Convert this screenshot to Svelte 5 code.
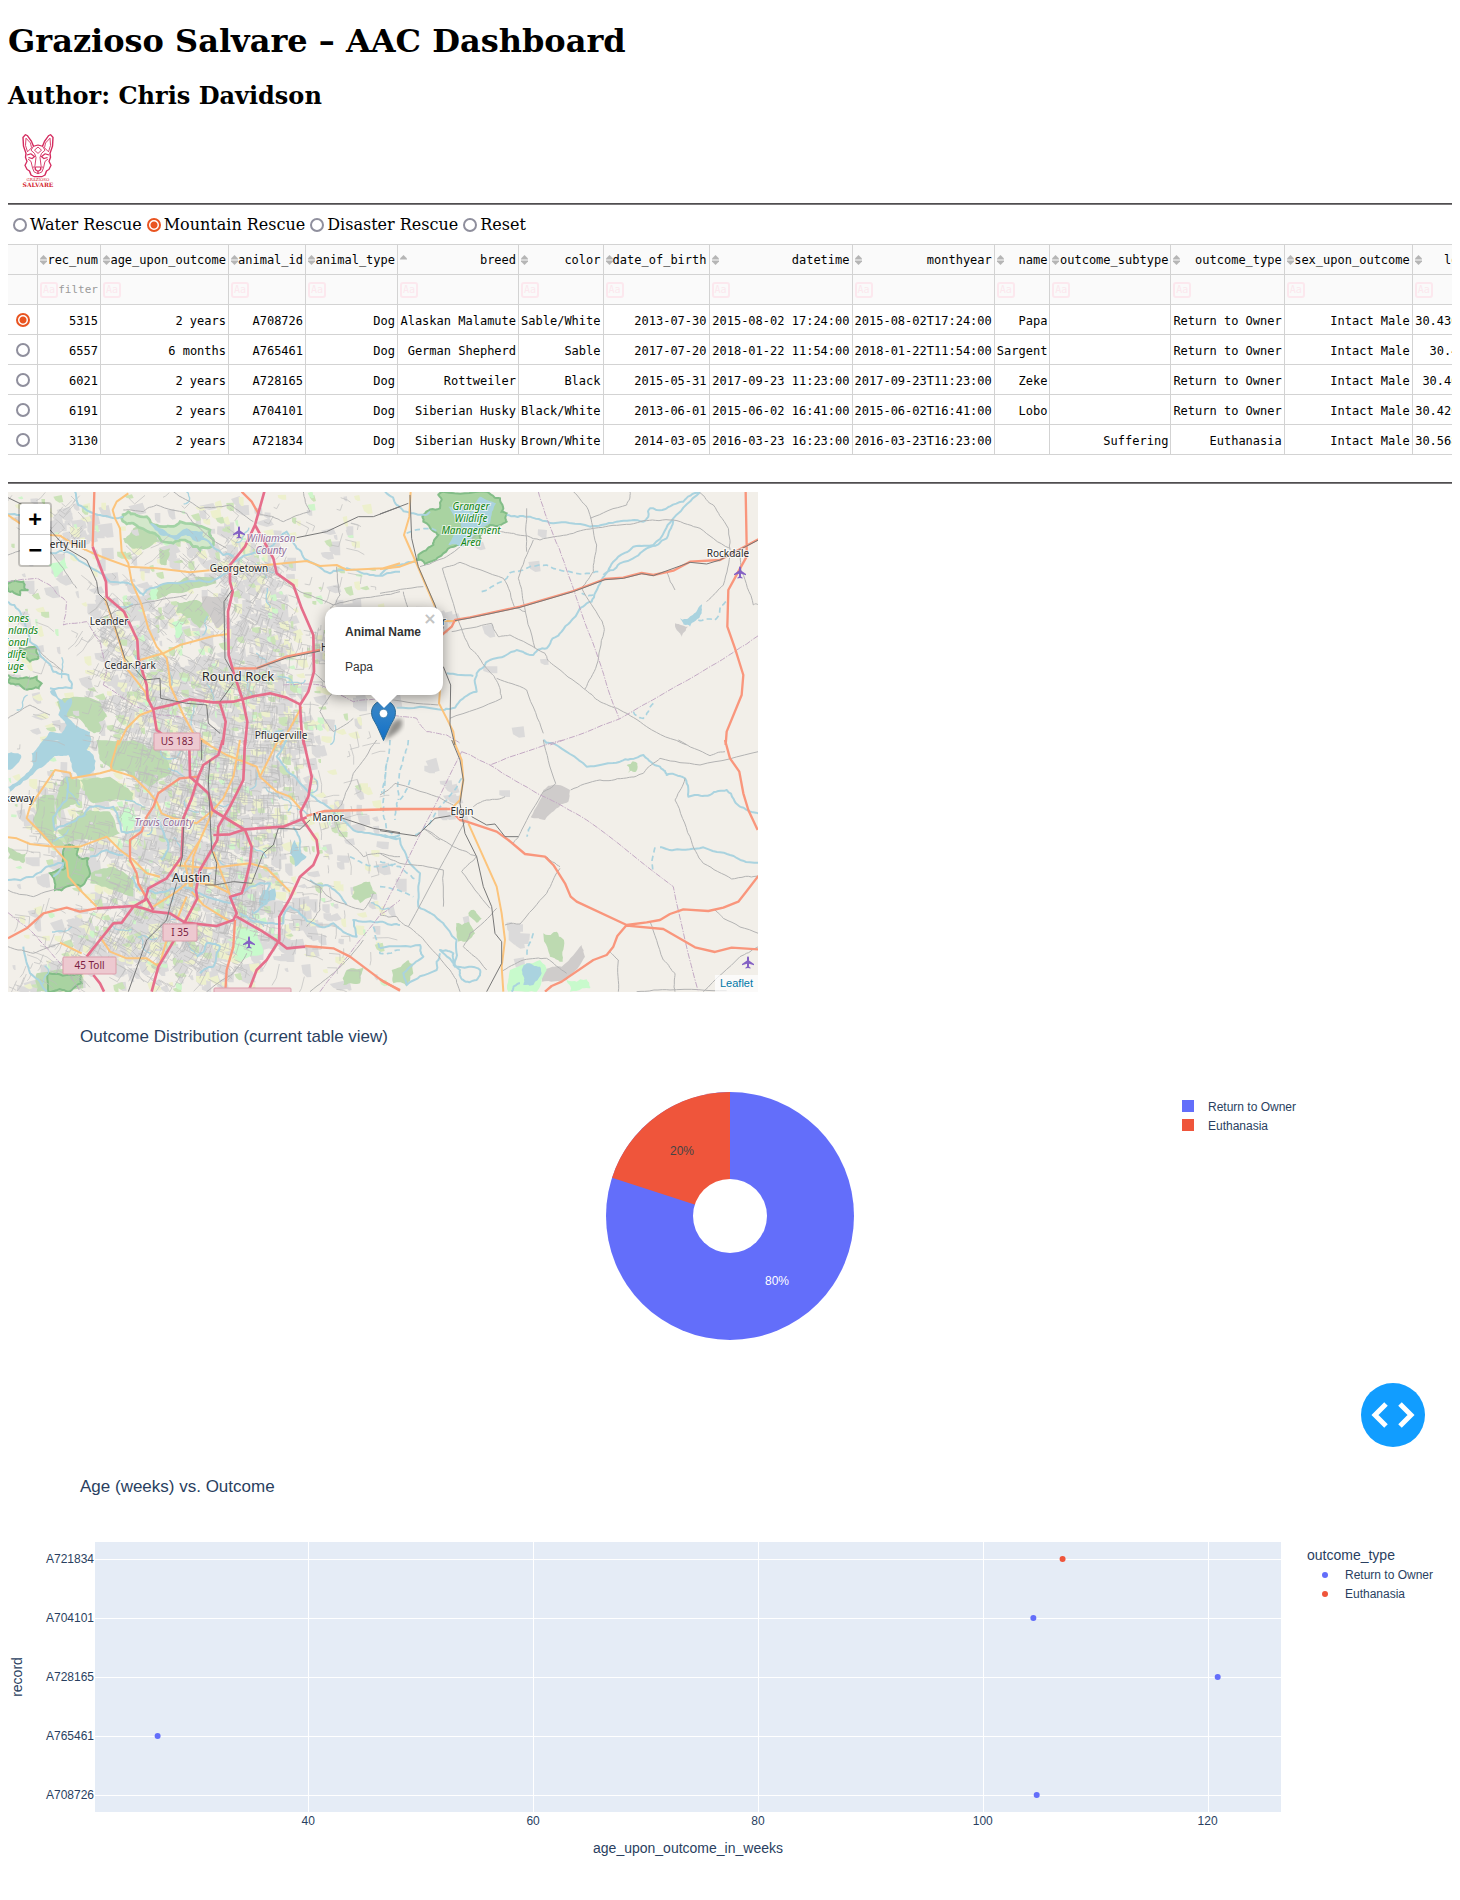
<script>
  let rescue = $state('Mountain Rescue');
  let selectedRow = $state(0);
  let sortColumn = $state('breed');
  let width = $state(1444);

  const rescues = ['Water Rescue', 'Mountain Rescue', 'Disaster Rescue', 'Reset'];
  const columns = [
    ['rec_num', 63], ['age_upon_outcome', 128], ['animal_id', 77], ['animal_type', 92], ['breed', 121], ['color', 84],
    ['date_of_birth', 106], ['datetime', 143], ['monthyear', 142], ['name', 55], ['outcome_subtype', 121],
    ['outcome_type', 113], ['sex_upon_outcome', 128], ['location_lat', 121]
  ].map(([name, w]) => ({ name, w }));
  const rows = [
    ['5315', '2 years', 'A708726', 'Dog', 'Alaskan Malamute', 'Sable/White', '2013-07-30', '2015-08-02 17:24:00', '2015-08-02T17:24:00', 'Papa', '', 'Return to Owner', 'Intact Male', '30.4301650478383'],
    ['6557', '6 months', 'A765461', 'Dog', 'German Shepherd', 'Sable', '2017-07-20', '2018-01-22 11:54:00', '2018-01-22T11:54:00', 'Sargent', '', 'Return to Owner', 'Intact Male', '30.45820413376'],
    ['6021', '2 years', 'A728165', 'Dog', 'Rottweiler', 'Black', '2015-05-31', '2017-09-23 11:23:00', '2017-09-23T11:23:00', 'Zeke', '', 'Return to Owner', 'Intact Male', '30.465103728164'],
    ['6191', '2 years', 'A704101', 'Dog', 'Siberian Husky', 'Black/White', '2013-06-01', '2015-06-02 16:41:00', '2015-06-02T16:41:00', 'Lobo', '', 'Return to Owner', 'Intact Male', '30.4264983127465'],
    ['3130', '2 years', 'A721834', 'Dog', 'Siberian Husky', 'Brown/White', '2014-03-05', '2016-03-23 16:23:00', '2016-03-23T16:23:00', '', 'Suffering', 'Euthanasia', 'Intact Male', '30.5683318126472']
  ];

  const blue = '#636efa';
  const red = '#ef553b';

  const plotLeft = 87;
  const plotWidth = $derived(width - 258);
  const xOf = (v) => plotLeft + ((v - 21.03) / 105.5) * plotWidth;
  const records = ['A721834', 'A704101', 'A728165', 'A765461', 'A708726'];
  const yOf = (i) => 117 + i * 59;
  const ticks = [40, 60, 80, 100, 120];
  const points = [
    { v: 107.1, i: 0, c: red },
    { v: 104.5, i: 1, c: blue },
    { v: 120.9, i: 2, c: blue },
    { v: 26.6, i: 3, c: blue },
    { v: 104.8, i: 4, c: blue }
  ];
  const cx = $derived(width / 2);

  // Terrain is kept in four tiles, at three units to the pixel.
  const tiles = [[0, 0], [1140, 0], [0, 765], [1140, 765]];

  let seed = 7;
  const rnd = () => {
    seed = (seed * 16807) % 2147483647;
    return seed / 2147483647;
  };

  function rough(d, amp, levels = 3) {
    return d
      .split('M')
      .filter(Boolean)
      .map((part) => {
        const closed = part.includes('Z');
        let pts = part.replace('Z', '').trim().split(/\s+/).map((p) => p.split(',').map(Number));
        if (closed) pts.push(pts[0]);
        for (let l = 0, a = amp; l < levels; l++, a /= 2) {
          const next = [];
          for (let k = 0; k < pts.length - 1; k++) {
            const [x1, y1] = pts[k];
            const [x2, y2] = pts[k + 1];
            const f = Math.min(1, Math.hypot(x2 - x1, y2 - y1) / 20);
            next.push(pts[k], [(x1 + x2) / 2 + (rnd() - 0.5) * a * 2 * f, (y1 + y2) / 2 + (rnd() - 0.5) * a * 2 * f]);
          }
          next.push(pts[pts.length - 1]);
          pts = next;
        }
        return 'M' + pts.map((p) => p[0].toFixed(0) + ',' + p[1].toFixed(0)).join(' ') + (closed ? 'Z' : '');
      })
      .join('');
  }

  // Town centres: x, y, radius across, radius down, weight
  const towns = [
    [580, 1160, 250, 300, 1], [640, 900, 230, 220, 1], [450, 660, 150, 170, 0.95], [700, 600, 180, 120, 0.95],
    [370, 440, 90, 130, 0.8], [740, 260, 120, 120, 0.65], [780, 420, 100, 140, 0.65], [830, 750, 110, 110, 0.7],
    [400, 1360, 220, 100, 0.85], [210, 110, 80, 70, 0.45], [600, 210, 160, 160, 0.25], [200, 1000, 160, 160, 0.3],
    [860, 1300, 120, 130, 0.35], [560, 400, 150, 90, 0.3], [1000, 980, 50, 50, 0.5], [180, 1440, 120, 70, 0.3],
    [1320, 960, 50, 50, 0.4], [1540, 1370, 30, 60, 0.8], [1280, 400, 60, 40, 0.6], [960, 480, 50, 60, 0.6]
  ];
  const density = (x, y, base = 0.01) => {
    let d = x < 1140 ? base * 4 : base;
    for (const [tx, ty, rx, ry, w] of towns) {
      d = Math.max(d, w * Math.exp(-Math.pow(((x - tx) / rx) ** 2 + ((y - ty) / ry) ** 2, 1.8)));
    }
    return d;
  };

  function patches(n, min, max, power, spanX) {
    let d = '';
    for (let k = 0; k < n; k++) {
      const x = 24 + rnd() * spanX;
      const y = 21 + rnd() * 1500;
      const w = min + rnd() * (max - min);
      const h = min + rnd() * (max - min);
      const s = w * (rnd() - 0.2) * 0.5;
      if (rnd() > Math.pow(density(x, y), power)) continue;
      d += `M${x | 0},${y | 0}l${w | 0},${(-s) | 0} ${(s) | 0},${h | 0} ${(-w / 2) | 0},${(s / 2) | 0} ${(-w / 2) | 0},${(-h / 3) | 0}Z`;
    }
    return d;
  }

  function streets(n) {
    let d = '';
    for (let k = 0; k < n; k++) {
      const x = 24 + rnd() * 1120;
      const y = 21 + rnd() * 1500;
      if (rnd() > density(x, y)) continue;
      const a = 0.3 * Math.sin(x / 260) + 0.3 * Math.cos(y / 300) + 0.25 + (rnd() < 0.5 ? Math.PI / 2 : 0) + (rnd() - 0.5) * 0.12;
      const l = 14 + rnd() * 34;
      const b = a + (rnd() < 0.5 ? 1.5 : 0.3);
      d += `M${x | 0},${y | 0}l${(Math.cos(a) * l) | 0},${(Math.sin(a) * l) | 0} ${(Math.cos(b) * l * 0.6) | 0},${(Math.sin(b) * l * 0.6) | 0}`;
    }
    return d;
  }

  function creeks(n) {
    let d = '';
    for (let k = 0; k < n; k++) {
      const x = 24 + rnd() * 1150;
      const y = 21 + rnd() * 1500;
      if (rnd() > density(x, y) + 0.05) continue;
      d += `M${x | 0},${y | 0}`;
      let a = rnd() * 1.6 - 0.3;
      for (let j = 0; j < 9; j++) {
        a += (rnd() - 0.5) * 1.3;
        d += `l${(Math.cos(a) * 8) | 0},${(Math.sin(a) * 8) | 0} `;
      }
    }
    return d;
  }

  const urban = patches(6500, 16, 44, 1, 1600);
  const farms = patches(900, 12, 32, 0.5, 1120);
  const woods = patches(800, 8, 28, 0.6, 1120);
  const parks = patches(520, 6, 22, 0.7, 1120);
  const suburbs = patches(700, 8, 24, 0.8, 1120);
  const blocks = streets(6000);
  const brooks = creeks(150);

  const layers = [
    ['forest', 8, [
      'M170,650 220,635 300,650 320,690 300,740 265,735 235,700 190,690ZM480,300 560,275 640,275 650,295 560,320 480,340 440,345 450,320ZM530,350 580,345 640,370 625,405 600,430 560,400 530,385ZM370,160 400,130 450,130 480,170 430,195 390,185ZM480,190 510,190 500,240 480,235Z',
      '',
      'M290,0 400,0 500,40 510,100 450,140 400,110 340,90 300,60ZM200,110 240,120 230,190 170,220 175,150ZM240,120 330,110 400,160 410,190 340,180 280,190 250,160ZM110,180 160,165 170,230 160,280 200,320 150,310 100,240ZM170,270 270,210 330,215 360,280 280,300 200,310ZM24,320 80,340 70,370 24,355ZM270,400 340,380 400,420 400,470 340,450 270,430ZM110,700 240,690 250,745 110,755ZM1060,440 1110,425 1130,460 1080,490 1055,470ZM1040,690 1090,680 1080,730 1030,735Z',
      'M490,580 530,575 552,600 548,665 510,650ZM228,550 265,545 285,580 250,605 230,590ZM265,520 285,512 305,535 290,548ZM740,75 765,65 768,95 745,98ZM35,690 85,660 100,700 80,740 40,730Z'
    ]],
    ['reserve', 8, [
      'M24,295 70,290 85,315 60,330 24,318ZM24,570 60,580 110,575 125,595 95,612 60,600 24,590ZM60,490 110,485 115,520 90,530Z',
      'M130,90 180,70 175,30 190,20 320,20 360,40 365,80 380,85 380,110 330,120 300,150 290,170 250,180 190,205 135,237 108,225 115,210 160,180 175,150 130,110Z',
      'M150,400 195,385 190,330 215,315 235,325 235,350 265,355 270,400 240,440 200,440 165,450ZM145,700 245,700 245,730 205,755 145,755Z',
      ''
    ]],
    ['preserve', 10, ['M365,100 385,80 440,95 490,125 540,110 630,135 640,180 600,195 555,165 520,175 470,150 400,115Z', '', '', '']],
    ['quarry', 5, ['M605,335 680,335 680,410 650,430 610,370Z', 'M885,415 925,425 905,455 890,435Z', '', 'M490,150 525,133 570,150 565,185 530,205 495,240 452,232ZM480,690 545,680 605,615 615,650 560,720 485,725Z']],
    ['mint', 8, ['M145,240 195,215 205,250 165,278ZM515,415 555,410 550,445 530,460ZM455,310 475,315 470,345 455,345Z', '', 'M350,230 385,200 410,230 400,260 370,280ZM710,560 770,570 790,640 730,660 705,640Z', 'M390,690 480,660 500,690 470,755 385,755ZM560,720 620,718 630,745 570,755Z']],
    ['lake', 6, [
      'M130,765 150,740 185,745 200,720 175,690 180,660 150,620 165,615 195,655 215,640 200,690 225,720 270,740 275,765ZM450,115 480,130 530,150 560,130 610,140 615,165 590,170 560,150 525,165 480,150Z',
      'M205,65 250,62 272,82 300,35 348,55 330,115 290,140 245,185 205,180 245,130 228,105ZM900,400 925,400 965,358 965,385 930,425 910,418Z',
      'M24,160 24,140 60,118 100,72 95,40 130,0 200,0 275,0 260,30 282,50 285,88 265,105 232,108 215,70 205,45 165,48 140,70 110,90 60,135ZM24,40 55,40 60,60 30,90 24,90ZM870,340 885,300 905,340 920,350 885,380ZM790,450 825,445 825,480 780,500Z',
      'M425,690 440,670 480,680 485,700 460,735 430,735Z'
    ]],
    ['river', 7, [
      'M225,20 235,60 300,90 370,95M24,88 90,105M150,205 200,200 260,240 330,290 400,300 430,330 450,310 540,295 620,290 690,260M690,240 740,210 820,180 860,140 890,190 920,225 990,265 1040,250 1110,270 1200,260M560,150 620,165 670,210 700,215M24,350 60,380 90,470 130,520 160,560 205,570 215,610 150,610',
      'M0,270 60,240 110,230M15,20 50,60 100,85 150,80M380,90 440,95 520,115 630,125 710,110 790,110 810,70 860,70 910,50 960,22M960,22 880,100 820,180 760,185 700,230 665,285 635,350 600,370 545,440 500,490 460,510 410,495 330,525 290,565 290,620 230,660 190,675 50,668M880,105 860,160 800,190 720,235 670,270M200,565 280,573',
      'M24,420 100,410 140,380 190,370 160,410M200,110 200,180 160,230 165,270 230,240 270,200 340,200 365,275 420,270 480,240 505,310 485,360M270,350 320,330 370,345M860,0 830,50 900,130 970,190 1060,270 1140,285 1200,285M930,420 990,440 1040,495M690,490 750,440 810,430 800,490 760,520M720,520 800,550 850,550 870,500 910,530 960,560 1000,550 1070,590 1060,540 1140,545 1200,555M590,650 620,610 660,620 640,680 600,700M880,260 900,310 890,350M70,620 90,700 140,755M395,410 420,450 470,460 540,440 600,460 690,490',
      'M490,0 520,10 620,80 720,65 790,45 840,80 860,105 915,115 925,170 990,165 1040,150 1080,200 1135,220M840,322 880,330 970,322 1050,345 1135,368M0,285 60,295 80,350 120,400 115,500 190,550 230,600 225,680 300,690 290,720 250,720 240,690 180,630 220,640 225,680M0,625 120,615 130,650 70,700 80,735 170,690 180,640M395,755 420,730'
    ]],
    ['stream', 6, [
      '', 'M80,145 155,130 175,140M305,320 380,280 400,260 500,240 590,265 660,260M955,405 1005,405 1025,360 1040,350M640,330 605,325M820,655 790,700 760,680',
      'M1160,70 1150,180 1160,270 1190,300M1050,350 1120,380 1190,370M1120,560 1140,640 1200,630',
      'M30,0 5,160M85,0 60,90 55,180M245,115 200,180 150,250 100,290M90,120 50,190 45,240M825,322 818,395M450,260 440,290M460,580 440,650M0,365 60,380 110,420M0,440 100,470'
    ]],
    ['minor', 4, [
      'M370,75 430,80 470,60 560,85 600,130 680,190M520,20 600,70 690,60 760,110M24,210 90,180 150,200 190,250 230,310M24,500 110,490 190,560M775,85 850,110 930,80 910,20M830,265 900,320 1000,360 1080,340 1200,320M1010,245 1020,330 990,370M300,400 400,360 560,330M940,560 1000,620 960,680M960,680 1000,740 1060,700M24,700 90,660 150,690',
      'M350,140 400,145 480,165 560,150 640,130 720,120 800,107 880,105 960,130 1050,190M580,20 625,75 650,180 640,260 605,310 660,400 672,440 650,540 615,612M630,100 740,60 750,20M960,22 1000,60 1045,130 1050,200 1030,300 980,350M1080,210 1085,260 1120,360 1135,358M187,250 240,232 370,280 405,370 435,380M187,250 240,420 270,490 320,550 345,580 365,640 210,700M460,165 415,280 430,350 465,490M215,440 335,415 355,455 390,450 495,505 520,540 610,610 660,650 720,675 800,725 920,780M120,245 200,215 290,150M350,580 440,615 490,745M0,325 130,305M70,320 95,400M440,70 440,200M860,260 885,315M0,640 175,660',
      'M1000,230 1040,300 1090,350 1140,340 1200,350M960,440 1000,480 1090,510 1120,460M1060,100 1030,180 1000,225M1130,0 1060,100M620,755 700,700 740,640M24,620 100,640 180,610M930,755 1000,700 1090,600M900,410 960,440 960,510 920,560M24,450 100,470 190,440',
      'M490,0 527,130M572,150 660,120 730,115 790,100 840,55 960,75 1135,35M895,0 990,47 1035,35M527,130 490,155 425,270 400,310M915,115 885,180 930,290 970,370 1055,417 1135,408M540,385 500,460 420,552 375,555M1005,510 1030,535 1135,580M810,545 850,660 885,700 885,755M690,635 715,660 715,755M1135,620 1080,650 970,755M365,695 430,660 500,655 560,700M0,165 45,130 170,170 220,195M280,200 320,180 375,170M0,340 60,370 190,390 190,500M130,265 220,320 290,350 245,395 330,505M130,265 180,300M85,560 255,245M0,525 50,530 85,560 140,610 210,690 240,755M350,505 270,580 250,620 320,690M500,350 540,380M770,755 870,750 1040,752'
    ]],
    ['border', 3, [
      'M24,290 110,280 160,310 200,350 190,420 260,410 300,470 320,560 310,600M310,600 400,660 480,690 560,700M850,600 960,600 1060,650 1140,640',
      'M475,20 520,150 580,310 655,520 718,702M1135,452 990,545 718,702 510,780M40,690 110,700 140,740 200,750 240,775',
      'M24,518 100,580 190,680 240,755M960,755 1140,525 1200,480',
      'M550,0 330,75M245,35 330,75 480,165 620,240 880,440 955,755M245,35 0,525'
    ]],
    ['primary', 1, [
      'M24,90 60,115 150,150 180,152 215,175 280,205 330,225 385,245 470,250 570,262 690,250 800,240 920,228 960,243 1010,240 1040,255 1150,250 1200,235M385,25 350,50 338,75 345,100 360,130 365,200 385,235 395,290 425,360 445,430 470,485 500,520 508,570 510,600 550,690 580,745 630,780M420,525 490,505 540,480 640,453 685,447M315,340 360,475 380,550 435,620 445,650M460,675 420,690 380,730 355,780M905,665 870,730 840,780',
      'M0,252 60,245 105,228M92,20 88,95 72,150 105,225 165,365M185,550 177,655 200,700 220,740 225,780M180,408 230,408',
      'M355,0 333,75 335,90 300,100 215,115 210,98 165,90 90,200 80,235 130,285 160,320 200,365 205,410 240,450 290,500M335,90 400,110 450,160 470,185 485,220 520,235 590,250 640,210 670,175 700,110 720,0M24,292 50,295 90,312 160,320 240,320 320,290 360,330 400,360 440,400 480,410M600,0 680,45 770,80 780,110 830,155 870,170 905,210M835,0 780,110M520,375 630,385 750,370 800,385 830,415 870,455M570,440 555,370 600,300 640,210M600,430 640,435 690,460M575,455 610,495 690,545M560,470 530,540M460,500 530,455 560,430M575,440 580,350 600,300M300,590 330,635 380,655 440,655 470,675 480,670 500,600M180,608 245,640M640,335 655,375 680,440 690,465',
      'M220,0 245,60 250,120 240,180 220,200M265,250 350,440 365,520 375,600 365,680 370,755'
    ]],
    ['trunk', 1, [
      'M283,20 278,185M700,550 770,550 860,515 960,495M725,20 755,50 775,85',
      'M180,455 215,425 225,405 270,397 420,365 580,318 675,282 730,278 785,264 820,270 880,257 930,230 1020,225 1135,163M1097,20 1100,180 1100,215 1075,260 1045,315 1042,425 1065,490 1090,570 1085,630 1040,740 1037,780',
      'M595,110 540,115 475,160 460,200 440,230 425,275 390,300 390,360 410,400 415,430 440,475M24,595 80,565 130,520 200,503 240,515 290,505M705,540 700,620 680,690 676,755M915,618 1000,625 1050,650 1150,725 1200,750M920,228 975,213 1200,207',
      'M0,207 220,207M225,225 240,240 260,245 350,275 385,300 435,342 495,350 520,375 555,430 572,470 590,485 740,555 800,547 840,540 870,522 910,508 985,513 1030,503 1075,485 1095,460 1135,408M740,557 850,567 945,622 1005,636 1055,623 1135,628M740,555 712,588 700,620 680,645 640,660 545,725 515,738 495,755M0,718 60,752M1035,0 1050,55 1078,95 1090,160 1105,210 1133,270'
    ]],
    ['motorway', 1, [
      'M278,185 318,290 320,335 372,380 412,465 415,520 440,600 443,640 460,675 470,735 490,750M793,20 765,120 735,185 690,240 690,290 698,320 684,380 686,510 700,560 728,645 742,710 735,780M765,120 820,220 830,265 880,300 905,370 940,450 942,560 925,620 900,660 905,740 912,780M460,672 520,658 570,643 640,652 700,650 755,635 810,625 860,638 900,658M660,655 677,710 668,780',
      '',
      'M735,0 730,120 690,200 655,260 652,300 600,390 588,450 592,475 555,545 520,605 475,680 455,755M910,0 935,110 925,170 902,215 905,235 950,300 955,340 940,375 900,410 870,475 838,530 838,600 800,660 770,690 745,755M668,0 655,45 610,75 595,110 575,175 550,235 545,350 500,415 445,445 435,480 400,500 365,548 340,550 300,600 260,650M280,705 300,730 312,755M568,20 570,110 625,160 638,210 735,270 755,320 750,370 735,430 725,460 690,470 710,520 700,540 650,558 555,548 510,520 460,515 430,505 400,498 290,505M440,475 460,510M640,285 690,283 735,268 850,260 920,232M710,530 780,570 835,605 860,625 915,620',
      ''
    ]],
    ['rail', 1, [
      'M24,38 90,70 150,135 200,190 260,225 290,290 295,325 320,350 350,440 375,520 435,585 480,580 482,640 560,655 620,660 625,715 660,745M696,315 672,350 675,520 697,560M700,595 660,650M890,158 980,140 1075,95 1120,95 1200,65M770,550 860,519 960,498',
      'M0,87 85,55M90,30 95,160 115,245 165,360 190,430M190,545 212,600 210,720 225,780M225,407 270,399 420,367 580,320 675,284 730,280 785,266 820,272 930,232 980,237 1020,225 1135,165',
      'M605,0 605,60M630,60 625,120 635,330 650,370 645,435 615,435M552,235 547,350 540,380M645,435 700,425 755,430 790,340 820,315 835,265 900,268 930,240M1020,232 1120,265 1200,278M530,430 510,500 500,540 440,600 385,755',
      'M215,0 240,60 250,120 240,190 255,280 290,350 310,440 335,500 345,580 365,605 365,670 320,755M0,272 110,288 165,235 225,225M275,230 320,255 345,252 375,290 415,290'
    ]]
  ].map(([kind, amp, parts]) => ({ kind, parts: parts.map((p) => (amp > 1 ? rough(p, amp) : p)) }));

  const places = [
    ['end', 78, 56, 'Liberty Hill'], ['middle', 231, 80, 'Georgetown'], ['middle', 101, 133, 'Leander'],
    ['middle', 122, 177, 'Cedar Park'], ['middle', 273, 247, 'Pflugerville'], ['start', 313, 159, 'Hutto'],
    ['end', 438, 133, 'Taylor'], ['middle', 720, 65, 'Rockdale'], ['end', 26, 310, 'Lakeway'],
    ['middle', 320, 329, 'Manor'], ['middle', 454, 323, 'Elgin']
  ];
  const reserves = [
    ['middle', 463, 18, 'Granger'], ['middle', 463, 30, 'Wildlife'], ['middle', 463, 42, 'Management'], ['middle', 463, 54, 'Area'],
    ['end', 21, 130, 'Balcones'], ['end', 30, 142, 'Canyonlands'], ['end', 20, 154, 'National'], ['end', 18, 166, 'Wildlife'], ['end', 16, 178, 'Refuge']
  ];
  const counties = [[263, 50, 'Williamson'], [263, 62, 'County'], [156, 334, 'Travis County']];
  const shields = [[146, 241, 46, 'US 183'], [155, 432, 34, 'I 35'], [55, 465, 53, '45 Toll'], [206, 496, 77, '']];
  const airports = [[231, 40], [732, 80], [241, 450], [740, 470]];
</script>

<main>
  <h1>Grazioso Salvare – AAC Dashboard</h1>
  <h2>Author: Chris Davidson</h2>

  <svg class="logo" viewBox="0 0 60 68" role="img" aria-label="Grazioso Salvare logo">
    <g fill="none" stroke="#d42a5e" stroke-width="1" stroke-linejoin="round" transform="translate(0 1.600) scale(1 0.800)">
      <path stroke-width="1.400" d="M18 31 L15.500 22 L15 11 L17.500 7.500 L19.500 9 L23.500 16 L25.500 22 L30 20.500 L34.500 22 L36.500 16 L40.500 9 L42.500 7.500 L45 11 L44.500 22 L42 31 L42.500 36 L41 41 L43 46 L41 51 L38.500 53 L37 58 L34 60 H26 L23 58 L21.500 53 L19 51 L17 46 L19 41 L17.500 36 Z" />
      <path d="M18 12 L17.500 21 L19.500 29 L23.500 24 L22.500 18 Z M42 12 L42.500 21 L40.500 29 L36.500 24 L37.500 18 Z" />
      <path d="M30 23 L33.500 27 L30 31 L26.500 27 Z M25.500 22 L23 27 L26.500 31 L28 36 L27 46 L25 49 M34.500 22 L37 27 L33.500 31 L32 36 L33 46 L35 49" />
      <path stroke-width="1.400" d="M19 33 L23 31.500 L26.500 35 L24 37.500 L20.500 36 M41 33 L37 31.500 L33.500 35 L36 37.500 L39.500 36" />
      <path d="M20 38 L23 41 L24.500 49 L26 54 L30 56.500 L34 54 L35.500 49 L37 41 L40 38" />
      <path stroke-width="1.400" d="M27 48 H33 L32.500 51.500 L30 53.500 L27.500 51.500 Z M30 53.500 V56" />
    </g>
    <text class="logo-small" x="30" y="54">GRAZIOSO</text>
    <text class="logo-name" x="30" y="60">SALVARE</text>
  </svg>

  <hr />

  <div class="rescues" role="radiogroup" aria-label="Rescue type">
    {#each rescues as r}
      <label><input type="radio" name="rescue" value={r} bind:group={rescue} />{r}</label>
    {/each}
  </div>

  <div class="table-wrap">
    <table>
      <colgroup>
        <col class="pick-col" />
        {#each columns as c}<col style="width: {c.w}px" />{/each}
      </colgroup>
      <thead>
        <tr>
          <th class="pick"></th>
          {#each columns as c}
            <th>
              <button class="sort" onclick={() => (sortColumn = c.name)}>
                <svg viewBox="0 0 7 10" aria-hidden="true">
                  <path d="M3.500 0 L7 3.500 V4.500 H0 V3.500 Z" />
                  {#if sortColumn !== c.name}<path d="M3.500 10 L7 6.500 V5.500 H0 V6.500 Z" />{/if}
                </svg>
                <span>{c.name}</span>
              </button>
            </th>
          {/each}
        </tr>
        <tr>
          <th class="pick"></th>
          {#each columns as c, i}
            <th>
              <div class="filter">
                <button class="case" aria-label="Toggle case for {c.name}">Aa</button>
                <input type="text" aria-label="Filter {c.name}" placeholder={i === 0 ? 'filter' : ''} />
              </div>
            </th>
          {/each}
        </tr>
      </thead>
      <tbody>
        {#each rows as row, i}
          <tr>
            <td class="pick"><input type="radio" name="row" aria-label="Select {row[0]}" value={i} bind:group={selectedRow} /></td>
            {#each row as cell}<td>{cell}</td>{/each}
          </tr>
        {/each}
      </tbody>
    </table>
  </div>

  <hr />

  <section class="map" aria-label="Map">
    <svg class="terrain" viewBox="0 0 750 500" role="img" aria-label="Street map of Austin, Texas">
      <rect width="750" height="500" fill="#f2efe9" />
      <g transform="translate(-8 -7) scale(0.33333)">
        <path class="urban" d={urban} />
        <path class="farm" d={farms} />
        <path class="wood" d={woods} />
        <path class="park" d={parks} />
        {#each layers.slice(0, 1) as layer}
          {#each layer.parts as d, k}
            <path class={layer.kind} {d} transform="translate({tiles[k][0]} {tiles[k][1]})" />
          {/each}
        {/each}
        <path class="urban" d={suburbs} />
        {#each layers.slice(1, 6) as layer}
          {#each layer.parts as d, k}
            <path class={layer.kind} {d} transform="translate({tiles[k][0]} {tiles[k][1]})" />
          {/each}
        {/each}
        <path class="brook" d={brooks} />
        <path class="block" d={blocks} />
        {#each layers.slice(6) as layer}
          {#each layer.parts as d, k}
            <path class={layer.kind} {d} transform="translate({tiles[k][0]} {tiles[k][1]})" />
          {/each}
        {/each}
      </g>
      {#each airports as [x, y]}
        <path class="plane" d="M0 -6 L1 -4.500 V-1.500 L6 2 V3.200 L1 1.800 V4.500 L2.600 5.700 V6.500 L0 6 L-2.600 6.500 V5.700 L-1 4.500 V1.800 L-6 3.200 V2 L-1 -1.500 V-4.500 Z" transform="translate({x} {y})" />
      {/each}
      {#each shields as [x, y, w, t]}
        <rect class="shield" {x} {y} width={w} height="17" rx="1" />
        {#if t}<text class="shield-text" x={x + w / 2} y={y + 12}>{t}</text>{/if}
      {/each}
      {#each counties as [x, y, t]}<text class="county" {x} {y}>{t}</text>{/each}
      {#each reserves as [a, x, y, t]}<text class="reserve-name" text-anchor={a} {x} {y}>{t}</text>{/each}
      {#each places as [a, x, y, t]}<text class="place" text-anchor={a} {x} {y}>{t}</text>{/each}
      <text class="city" x="230" y="189">Round Rock</text>
      <text class="city" x="183" y="390">Austin</text>
    </svg>

    <div class="zoom">
      <button aria-label="Zoom in">+</button>
      <button aria-label="Zoom out">−</button>
    </div>

    <svg class="marker" viewBox="0 0 50 44" role="img" aria-label="Animal location">
      <defs>
        <linearGradient id="pin" x1="0" y1="0" x2="0" y2="1">
          <stop offset="0" stop-color="#3e8bc9" />
          <stop offset="1" stop-color="#126fc6" />
        </linearGradient>
        <filter id="soft"><feGaussianBlur stdDeviation="2" /></filter>
      </defs>
      <path d="M13 41 L20 24 Q28 16 31 20 Q33 27 25 33 Z" fill="#000" opacity="0.4" filter="url(#soft)" />
      <path d="M12.500 0.500 C5.800 0.500 0.500 5.900 0.500 12.500 C0.500 18 3.500 21 6 26 L12.500 40.500 L19 26 C21.500 21 24.500 18 24.500 12.500 C24.500 5.900 19.200 0.500 12.500 0.500 Z" fill="url(#pin)" stroke="#2e6c97" stroke-width="1" />
      <circle cx="12.500" cy="13.500" r="4.200" fill="#fff" stroke="#2e6c97" stroke-width="0.600" />
    </svg>

    <div class="popup">
      <strong>Animal Name</strong>
      <p>Papa</p>
      <button class="close" aria-label="Close popup">×</button>
      <svg class="tip" viewBox="0 0 40 20" aria-hidden="true"><path d="M6 0 L20 14 L34 0 Z" /></svg>
    </div>

    <a class="credit" href="https://leafletjs.com">Leaflet</a>
  </section>

  <section class="chart" bind:clientWidth={width}>
    <svg {width} height="450" role="img" aria-label="Outcome distribution">
      <text class="title" x="72" y="50">Outcome Distribution (current table view)</text>
      <g transform="translate({cx} 224)">
        <circle r="124" fill={blue} />
        <path d="M0 0 V-124 A124 124 0 0 0 -117.930 -38.320 Z" fill={red} />
        <circle r="37" fill="#fff" />
        <text class="slice dark" x="-48" y="-61">20%</text>
        <text class="slice" x="47" y="69">80%</text>
      </g>
      <rect x={width - 270} y="108" width="12" height="12" fill={blue} />
      <rect x={width - 270} y="127" width="12" height="12" fill={red} />
      <text class="label" x={width - 244} y="119">Return to Owner</text>
      <text class="label" x={width - 244} y="138">Euthanasia</text>
    </svg>
    <button class="debug" aria-label="Developer tools">
      <svg viewBox="0 0 64 64" aria-hidden="true"><path d="M25 21 L14 32 L25 43 M39 21 L50 32 L39 43" /></svg>
    </button>
  </section>

  <section class="chart">
    <svg {width} height="450" role="img" aria-label="Age in weeks against outcome">
      <text class="title" x="72" y="50">Age (weeks) vs. Outcome</text>
      <rect x={plotLeft} y="100" width={plotWidth} height="270" fill="#e5ecf6" />
      {#each ticks as t}
        <path class="grid" d="M{Math.round(xOf(t))} 100 V370" />
        <text class="label mid" x={xOf(t)} y="383">{t}</text>
      {/each}
      {#each records as r, i}
        <path class="grid" d="M{plotLeft} {yOf(i)} H{plotLeft + plotWidth}" />
        <text class="label end" x={plotLeft - 1} y={yOf(i) + 4}>{r}</text>
      {/each}
      {#each points as p}
        <circle cx={xOf(p.v)} cy={yOf(p.i)} r="3" fill={p.c} />
      {/each}
      <text class="axis" x={plotLeft + plotWidth / 2} y="411">age_upon_outcome_in_weeks</text>
      <text class="axis" transform="translate(14 235) rotate(-90)">record</text>
      <text class="legend-title" x={width - 145} y="118">outcome_type</text>
      <circle cx={width - 127} cy="133" r="3" fill={blue} />
      <circle cx={width - 127} cy="152" r="3" fill={red} />
      <text class="label" x={width - 107} y="137">Return to Owner</text>
      <text class="label" x={width - 107} y="156">Euthanasia</text>
    </svg>
  </section>
</main>

<style>
  :global(body) {
    margin: 0;
    background: #fff;
    color: #000;
  }
  main {
    padding: 22px 8px 8px;
    font-family: 'DejaVu Serif', serif;
    font-size: 16px;
  }
  h1 {
    margin: 0 0 22px;
    font-size: 32px;
    line-height: 38px;
  }
  h2 {
    margin: 0 0 17px;
    font-size: 24px;
    line-height: 28px;
  }
  .logo {
    display: block;
    width: 60px;
    height: 68px;
  }
  .logo-name,
  .logo-small {
    fill: #d4262f;
    text-anchor: middle;
  }
  .logo-name {
    font: bold 6px 'DejaVu Serif', serif;
  }
  .logo-small {
    font: 4px 'DejaVu Serif', serif;
  }
  hr {
    height: 0;
    margin: 8px 0;
    border: 0;
    border-top: 1px solid #504e50;
    border-bottom: 1px solid #7c7a7c;
  }
  input[type='radio'] {
    appearance: none;
    box-sizing: border-box;
    flex: none;
    width: 14px;
    height: 14px;
    margin: 0;
    border: 2px solid #8f8f9d;
    border-radius: 50%;
    background: #fff;
  }
  input[type='radio']:checked {
    border-color: #e95420;
    background: radial-gradient(circle, #e95420 3px, #fff 4px);
  }
  .rescues {
    display: flex;
    gap: 5px;
    height: 23px;
    padding: 0 0 8px 5px;
  }
  .rescues label {
    display: flex;
    align-items: center;
    gap: 3px;
  }
  .table-wrap {
    overflow: hidden;
    margin-bottom: 27px;
  }
  table {
    width: max-content;
    border-collapse: separate;
    border-spacing: 0;
    border-top: 1px solid #d3d3d3;
    font: 12px 'DejaVu Sans Mono', monospace;
  }
  th,
  td {
    box-sizing: border-box;
    height: 30px;
    padding: 0 2px;
    border-right: 1px solid #d3d3d3;
    border-bottom: 1px solid #d3d3d3;
    font-weight: normal;
    text-align: right;
    white-space: nowrap;
  }
  td {
    padding-top: 3px;
  }
  th {
    background: #fafafa;
  }
  .pick-col {
    width: 30px;
  }
  .pick {
    padding: 0;
    text-align: center;
    line-height: 0;
  }
  button {
    padding: 0;
    border: 0;
    background: none;
    color: inherit;
    font: inherit;
    cursor: pointer;
  }
  .sort {
    display: flex;
    align-items: center;
    justify-content: space-between;
    width: 100%;
  }
  .sort svg {
    width: 7px;
    height: 10px;
    fill: #b5b5b5;
  }
  .filter {
    display: flex;
    align-items: center;
    height: 16px;
  }
  .case {
    box-sizing: border-box;
    flex: none;
    width: 18px;
    height: 16px;
    border: 2px solid #fce8ee;
    border-radius: 3px;
    color: #fce8ee;
    font-size: 10px;
    line-height: 12px;
  }
  .filter input {
    flex: 1;
    width: 0;
    min-width: 0;
    padding: 0;
    border: 0;
    background: none;
    font: 11px 'DejaVu Sans Mono', monospace;
    text-align: right;
  }
  .filter input::placeholder {
    color: #9b9b9b;
    opacity: 1;
  }

  .map {
    position: relative;
    overflow: hidden;
    max-width: 750px;
    font: 12px 'Liberation Sans', Arial, sans-serif;
  }
  .terrain {
    display: block;
    width: 100%;
  }
  .urban { fill: #dbdada; }
  .farm { fill: #edf0cd; }
  .wood { fill: #cbe3b8; }
  .park { fill: #cff5ca; }
  .forest { fill: #bddab1; }
  .reserve { fill: #a9d3a1; stroke: #83bd88; stroke-width: 6; }
  .preserve { fill: #d3e8cb; stroke: #a3d3a5; stroke-width: 8; }
  .quarry { fill: #cfcccb; }
  .mint { fill: #c8facc; }
  .lake { fill: #aad3df; }
  .river, .stream, .brook, .block, .minor, .border, .primary, .trunk, .motorway, .rail {
    fill: none;
    stroke-linejoin: round;
  }
  .river { stroke: #aad3df; stroke-width: 6; }
  .stream { stroke: #aad3df; stroke-width: 5; stroke-dasharray: 16 10; }
  .brook { stroke: #aad3df; stroke-width: 4; }
  .block { stroke: #bdbdbd; stroke-width: 2; }
  .minor { stroke: #b3b3b3; stroke-width: 3; }
  .border { stroke: #c3a9c4; stroke-width: 3; stroke-dasharray: 18 4 4 4; }
  .primary { stroke: #fcc47c; stroke-width: 6; }
  .trunk { stroke: #f9967c; stroke-width: 7; }
  .motorway { stroke: #e66e8b; stroke-width: 8; }
  .rail { stroke: #777; stroke-width: 3; }
  .plane { fill: #8461c4; }
  .shield { fill: #edc9d0; stroke: #dc9dab; }
  .terrain text {
    font-family: 'Noto Sans', sans-serif;
    font-size: 10px;
    paint-order: stroke;
    stroke: rgba(255, 255, 255, 0.7);
    stroke-width: 2px;
    fill: #2b2b2b;
  }
  .terrain .shield-text {
    text-anchor: middle;
    stroke: none;
    fill: #7b1d41;
  }
  .terrain .county {
    text-anchor: middle;
    font-style: italic;
    fill: #94709b;
  }
  .terrain .reserve-name {
    font-style: italic;
    fill: #118613;
  }
  .terrain .city {
    text-anchor: middle;
    font-size: 13px;
  }
  .zoom {
    position: absolute;
    top: 10px;
    left: 10px;
    border: 2px solid rgba(0, 0, 0, 0.2);
    border-radius: 4px;
    background-clip: padding-box;
  }
  .zoom button {
    display: block;
    width: 30px;
    height: 30px;
    background: #fff;
    font: bold 22px/30px 'DejaVu Sans Mono', monospace;
  }
  .zoom button:first-child {
    border-bottom: 1px solid #ccc;
    border-radius: 2px 2px 0 0;
    height: 31px;
  }
  .zoom button:last-child {
    border-radius: 0 0 2px 2px;
  }
  .marker {
    position: absolute;
    top: 208px;
    left: 363px;
    width: 50px;
    height: 44px;
  }
  .popup {
    position: absolute;
    top: 115px;
    left: 317px;
    box-sizing: border-box;
    min-width: 118px;
    height: 88px;
    padding: 17px 20px;
    border-radius: 12px;
    background: #fff;
    box-shadow: 0 3px 14px rgba(0, 0, 0, 0.4);
    color: #333;
    line-height: 17px;
    white-space: nowrap;
  }
  .popup strong {
    display: block;
  }
  .popup p {
    margin: 18px 0 0;
  }
  .tip {
    position: absolute;
    top: 87px;
    left: 39px;
    width: 40px;
    height: 20px;
    fill: #fff;
  }
  .close {
    position: absolute;
    top: 5px;
    right: 5px;
    width: 16px;
    height: 14px;
    color: #c3c3c3;
    font: bold 16px/14px 'DejaVu Sans', sans-serif;
  }
  .credit {
    position: absolute;
    right: 0;
    bottom: 0;
    padding: 0 5px;
    background: rgba(255, 255, 255, 0.7);
    color: #0078a8;
    font-size: 11px;
    line-height: 17px;
    text-decoration: none;
  }

  .chart {
    position: relative;
    height: 450px;
  }
  .chart svg {
    display: block;
  }
  .chart text {
    font-family: 'Liberation Sans', Arial, sans-serif;
    fill: #2a3f5f;
  }
  .title { font-size: 17px; }
  .label, .slice { font-size: 12px; }
  .mid, .slice, .axis { text-anchor: middle; }
  .end { text-anchor: end; }
  .axis, .legend-title { font-size: 14px; }
  .chart .slice { fill: #fff; }
  .chart .dark { fill: #444; }
  .grid { stroke: #fff; stroke-width: 1; shape-rendering: crispEdges; }
  .debug {
    position: absolute;
    z-index: 1;
    right: 27px;
    bottom: -5px;
    width: 64px;
    height: 64px;
    border-radius: 50%;
    background: #119dff;
  }
  .debug path {
    fill: none;
    stroke: #fff;
    stroke-width: 5;
  }
</style>
